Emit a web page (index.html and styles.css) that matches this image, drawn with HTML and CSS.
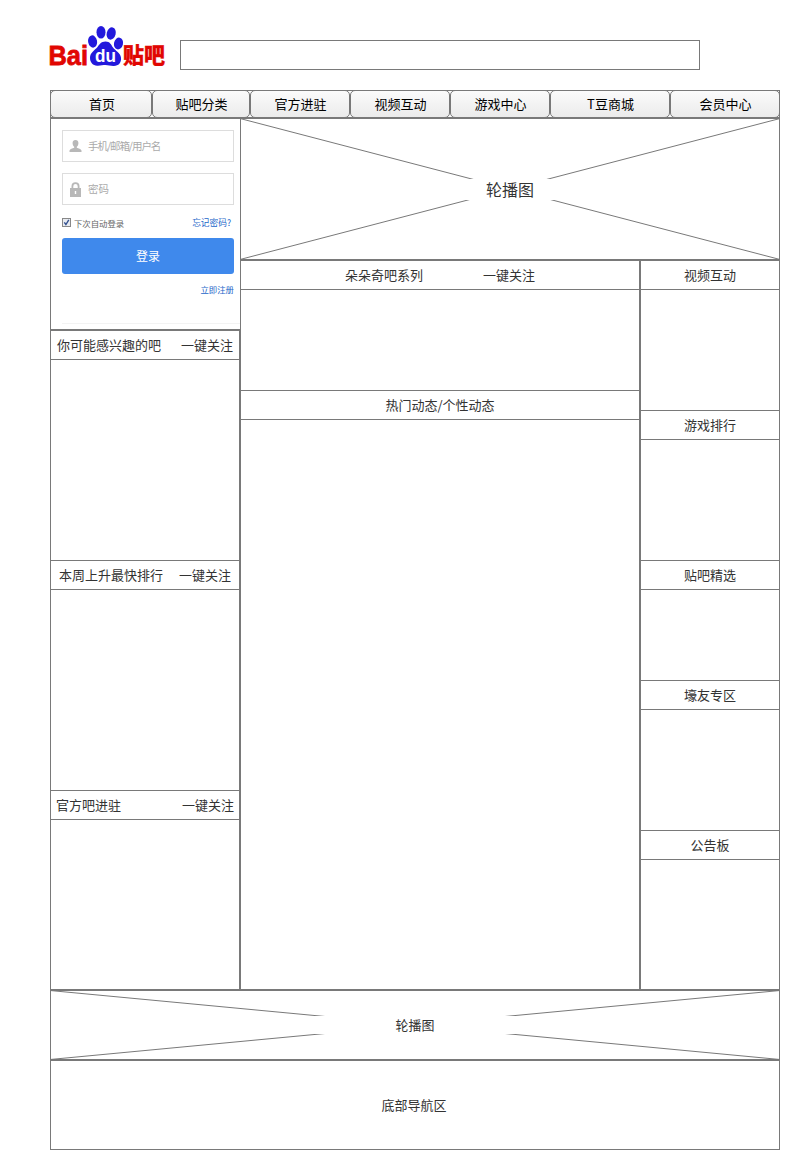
FILE: index.html
```
<!DOCTYPE html>
<html lang="zh-CN">
<head>
<meta charset="utf-8">
<title>贴吧</title>
<link rel="stylesheet" href="styles.css">
</head>
<body>
<div class="page">
  <header class="top">
    <svg class="logo" width="118" height="48" viewBox="0 0 118 48" role="img" aria-label="Baidu 贴吧">
      <g class="logo-red">
        <text x="0.500" y="41.500" font-size="28" textLength="39.500" lengthAdjust="spacingAndGlyphs">Bai</text>
        <text class="logo-cjk" x="75" y="39.500" font-size="21.500" textLength="42" lengthAdjust="spacingAndGlyphs">贴吧</text>
      </g>
      <g class="logo-blue">
        <ellipse cx="44.600" cy="18.500" rx="4.500" ry="6.200" transform="rotate(-10 44.600 18.500)"/>
        <ellipse cx="53" cy="9.300" rx="4.500" ry="6.300"/>
        <ellipse cx="63.200" cy="10.500" rx="4.500" ry="6.300" transform="rotate(14 63.200 10.500)"/>
        <ellipse cx="70.500" cy="20.500" rx="4.500" ry="6" transform="rotate(12 70.500 20.500)"/>
        <path d="M57.500 18.500c-4.500 0-6 3-8 5.500-2.700 3.300-7.500 5.500-7.500 10.800 0 5 3.500 8.400 8 7.900 3-.3 5-.8 7.500-.8s4.800.8 7.800 1c5 .3 8.200-3.200 7.700-8.200-.5-4.700-5.500-7-8-10.200C63 21.500 62 18.500 57.500 18.500z"/>
      </g>
      <text class="logo-du" x="47" y="38.500" font-size="17.500" textLength="21" lengthAdjust="spacingAndGlyphs">du</text>
    </svg>
    <input class="search" type="text" aria-label="搜索">
  </header>

  <nav class="nav">
    <a>首页</a><a>贴吧分类</a><a>官方进驻</a><a>视频互动</a><a>游戏中心</a><a>T豆商城</a><a>会员中心</a>
  </nav>

  <main class="main">
    <div class="left">
      <form class="login">
        <div class="field">
          <svg width="13" height="12" viewBox="0 0 13 12"><path d="M6.500 0C4.400 0 3.400 1.500 3.600 3.500c.1 1.500.8 2.600 1.600 3.300v1C3.500 8.600 1 9 .5 10.500V12h12v-1.500C12 9 9.500 8.600 7.800 7.800v-1C8.600 6.100 9.300 5 9.400 3.500 9.600 1.500 8.600 0 6.500 0z"/></svg>
          <span class="tight">手机/邮箱/用户名</span>
        </div>
        <div class="field">
          <svg width="13" height="15" viewBox="0 0 13 15"><path fill-rule="evenodd" d="M2.500 6V4.200a4 4 0 0 1 8 0V6H12v9H1V6zm1.800 0h4.400V4.300a2.200 2.200 0 0 0-4.400 0zM5.800 9v3h1.400V9z"/></svg>
          <span>密码</span>
        </div>
        <div class="options">
          <svg width="9" height="9" viewBox="0 0 9 9"><rect class="box" x=".5" y=".5" width="8" height="8"/><path class="tick" d="M2.300 4.300l1.600 2.200 2.900-4.600"/></svg>
          <span>下次自动登录</span>
          <a>忘记密码?</a>
        </div>
        <div class="submit">登录</div>
        <a class="register">立即注册</a>
        <div class="rule"></div>
      </form>
      <section class="panel h230"><h2 class="split inset-6"><span>你可能感兴趣的吧</span><span>一键关注</span></h2></section>
      <section class="panel h230"><h2 class="split inset-8"><span>本周上升最快排行</span><span>一键关注</span></h2></section>
      <section class="panel fill"><h2 class="split inset-5"><span>官方吧进驻</span><span>一键关注</span></h2></section>
    </div>

    <div class="right">
      <section class="carousel">
        <svg width="540" height="142" viewBox="0 0 540 142"><path d="M0 .5L540 141.500M0 141.500L540 .5"/></svg>
        <div class="caption">轮播图</div>
      </section>
      <div class="columns">
        <div class="center">
          <section class="panel h130"><h2 class="split inset-104"><span>朵朵奇吧系列</span><span>一键关注</span></h2></section>
          <section class="panel fill"><h2><span>热门动态/个性动态</span></h2></section>
        </div>
        <div class="side">
          <section class="panel h150"><h2>视频互动</h2></section>
          <section class="panel h150"><h2>游戏排行</h2></section>
          <section class="panel h120"><h2>贴吧精选</h2></section>
          <section class="panel h150"><h2>壕友专区</h2></section>
          <section class="panel fill"><h2>公告板</h2></section>
        </div>
      </div>
    </div>
  </main>

  <section class="carousel banner">
    <svg width="730" height="70" viewBox="0 0 730 70"><path d="M0 .5L730 69.500M0 69.500L730 .5"/></svg>
    <div class="caption">轮播图</div>
  </section>
  <footer class="footer">底部导航区</footer>
</div>
</body>
</html>
```
FILE: styles.css
```
* { box-sizing: border-box; }
body {
  margin: 0;
  background: #fff;
  color: #333;
  font: 13px/20px "Noto Sans CJK SC", sans-serif;
}
.page { width: 730px; margin-left: 50px; }

.top { display: flex; height: 90px; padding-top: 23px; }
.logo { flex: none; margin-left: -2px; overflow: visible; }
.logo-red { fill: #e10602; font-family: "Liberation Sans", sans-serif; font-weight: bold; stroke: #e10602; stroke-width: .8; }
.logo-cjk { font-family: "Noto Sans CJK SC", sans-serif; font-weight: 900; stroke-width: .3; }
.logo-blue { fill: #2319dc; }
.logo-du { fill: #fff; font-family: "Liberation Sans", sans-serif; font-weight: bold; }
.search {
  width: 520px;
  height: 30px;
  margin: 17px 0 0 14px;
  padding: 0 8px;
  border: 1px solid #797979;
  background: #fff;
}

.nav {
  display: grid;
  grid-template-columns: 102px 98px 100px 100px 100px 120px 110px;
  height: 28px;
  background: #fff;
  box-shadow: inset 0 0 0 1px #797979;
}
.nav a {
  border: 1px solid #797979;
  border-radius: 5px;
  background: linear-gradient(#fbfbfb, #ebebeb);
  color: #000;
  line-height: 26px;
  text-align: center;
}
.nav a:first-child { padding-left: 2px; }
.nav a:nth-child(n+2) { padding-left: 1px; }

.main { display: grid; grid-template-columns: 190px 540px; height: 872px; }
.left, .right, .center, .side { display: flex; flex-direction: column; }
.columns { display: grid; grid-template-columns: 400px 140px; flex: 1; }

.login {
  height: 212px;
  padding: 11px 6px 0 11px;
  border: 1px solid #797979;
  border-right: 0;
}
.field {
  display: flex;
  align-items: center;
  width: 172px;
  height: 32px;
  margin-bottom: 11px;
  padding-left: 6px;
  gap: 6px;
  border: 1px solid #ddd;
  color: #aaa;
  font-size: 10.5px;
}
.field svg { fill: #b8b8b8; }
.tight { letter-spacing: -1.05px; }
.options {
  display: flex;
  align-items: center;
  height: 14px;
  width: 169px;
  gap: 3px;
  color: #666;
  font-size: 8.4px;
}
.options svg { margin-top: -1px; }
.options a { margin-left: auto; }
.options a, .register { color: #1b66c9; font-size: 8.7px; }
.box { fill: #e8ebf0; stroke: #888; }
.tick { fill: none; stroke: #32508f; stroke-width: 1.4; }
.submit {
  width: 172px;
  height: 36px;
  margin-top: 8px;
  border-radius: 3px;
  background: #3f89ec;
  color: #fff;
  font-size: 12px;
  line-height: 35px;
  text-align: center;
}
.register { display: block; width: 172px; margin-top: 5px; text-align: right; font-size: 8.4px; }
.rule { width: 178px; margin-top: 24px; border-top: 1px solid #f3f3f3; }

.panel { border: 1px solid #797979; border-bottom: 0; background: #fff; }
.panel h2 {
  display: flex;
  justify-content: center;
  height: 29px;
  margin: 0;
  border-bottom: 1px solid #797979;
  font-size: 13px;
  font-weight: normal;
  line-height: 28px;
}
.panel h2.split { justify-content: space-between; }
.inset-5 { padding: 0 5px; }
.inset-6 { padding: 0 6px; }
.inset-8 { padding: 0 8px; }
.inset-104 { padding: 0 104px; }
.h120 { height: 120px; }
.h130 { height: 130px; }
.h150 { height: 150px; }
.h230 { height: 230px; }
.panel.fill { flex: 1; border-bottom: 1px solid #797979; }

.carousel {
  display: grid;
  height: 142px;
  border: 1px solid #797979;
}
.carousel svg, .caption { grid-area: 1 / 1; }
.carousel svg { margin: -1px; }
.carousel path { stroke: #797979; fill: none; }
.caption {
  align-self: center;
  margin: 0 60px;
  height: 21px;
  background: #fff;
  font-size: 16px;
  line-height: 21px;
  text-align: center;
}
.banner { height: 70px; }
.banner .caption { height: 18px; font-size: 13px; line-height: 18px; }
.footer {
  height: 90px;
  padding-right: 2px;
  border: 1px solid #797979;
  line-height: 88px;
  text-align: center;
}
```
